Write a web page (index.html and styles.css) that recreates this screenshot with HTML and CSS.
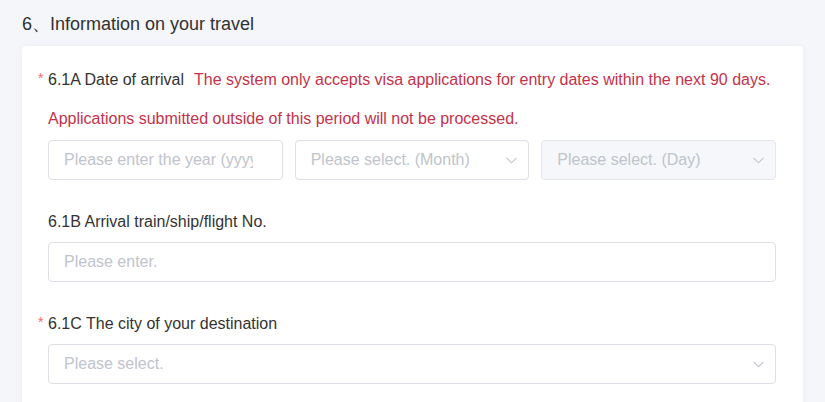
FILE: index.html
```html
<!DOCTYPE html>
<html>
<head>
<meta charset="utf-8">
<link rel="stylesheet" href="styles.css">
</head>
<body>
<div class="page">
  <h2 class="section-title">6、Information on your travel</h2>
  <div class="card">
    <div class="form-item">
      <div class="label required"><span class="label-text">6.1A Date of arrival</span><span class="tip">The system only accepts visa applications for entry dates within the next 90 days.</span></div>
      <div class="tip-line">Applications submitted outside of this period will not be processed.</div>
      <div class="row3">
        <div class="input text-suffix"><span class="ph">Please enter the year (yyyy)</span></div>
        <div class="input select"><span class="ph">Please select. (Month)</span><svg class="chev" width="11" height="7" viewBox="0 0 11 7"><polyline points="0.5,0.8 5.5,5.8 10.5,0.8" fill="none" stroke="#c0c4cc" stroke-width="1.1"/></svg></div>
        <div class="input select disabled"><span class="ph">Please select. (Day)</span><svg class="chev" width="11" height="7" viewBox="0 0 11 7"><polyline points="0.5,0.8 5.5,5.8 10.5,0.8" fill="none" stroke="#c0c4cc" stroke-width="1.1"/></svg></div>
      </div>
    </div>
    <div class="form-item">
      <div class="label"><span class="label-text">6.1B Arrival train/ship/flight No.</span></div>
      <div class="input"><span class="ph">Please enter.</span></div>
    </div>
    <div class="form-item">
      <div class="label required"><span class="label-text">6.1C The city of your destination</span></div>
      <div class="input select"><span class="ph">Please select.</span><svg class="chev" width="11" height="7" viewBox="0 0 11 7"><polyline points="0.5,0.8 5.5,5.8 10.5,0.8" fill="none" stroke="#c0c4cc" stroke-width="1.1"/></svg></div>
    </div>
  </div>
</div>
</body>
</html>
```
FILE: styles.css
```css
* { box-sizing: border-box; }
html, body {
  margin: 0;
  padding: 0;
  background: #f5f6fa;
  font-family: "Liberation Sans", Arial, sans-serif;
  overflow: hidden;
}
.page {
  padding: 12px 22px 0 22px;
}
.section-title {
  margin: 0 0 9px 0;
  font-size: 18px;
  line-height: 25px;
  font-weight: normal;
  color: #303133;
}
.card {
  background: #fff;
  border-radius: 4px;
  box-shadow: 0 0 8px rgba(0, 0, 0, 0.04);
  padding: 14px 27px 40px 26px;
  height: 400px;
}
.form-item {
  margin-bottom: 22px;
}
.label {
  position: relative;
  font-size: 16px;
  line-height: 40px;
  color: #333;
  white-space: nowrap;
}
.label.required::before {
  content: "*";
  position: absolute;
  left: -10px;
  top: -2px;
  color: #f56c6c;
  font-size: 14px;
}
.tip {
  color: #c4324a;
  margin-left: 10px;
}
.tip-line {
  color: #c4324a;
  font-size: 16px;
  line-height: 40px;
  margin-top: -1px;
  margin-bottom: 1px;
}
.row3 {
  display: grid;
  grid-template-columns: 1fr 1fr 1fr;
  gap: 12px;
}
.input {
  height: 40px;
  border: 1px solid #dcdfe6;
  border-radius: 4px;
  background: #fff;
  display: flex;
  align-items: center;
  padding: 0 11px 0 15px;
  overflow: hidden;
}
.input.text-suffix {
  padding-right: 29px;
}
.ph {
  color: #c0c4cc;
  font-size: 16px;
  white-space: nowrap;
  overflow: hidden;
  flex: 1;
}
.input.disabled {
  background: #f5f7fa;
  border-color: #e4e7ed;
}
.chev {
  flex: none;
  margin-left: 8px;
}
```
